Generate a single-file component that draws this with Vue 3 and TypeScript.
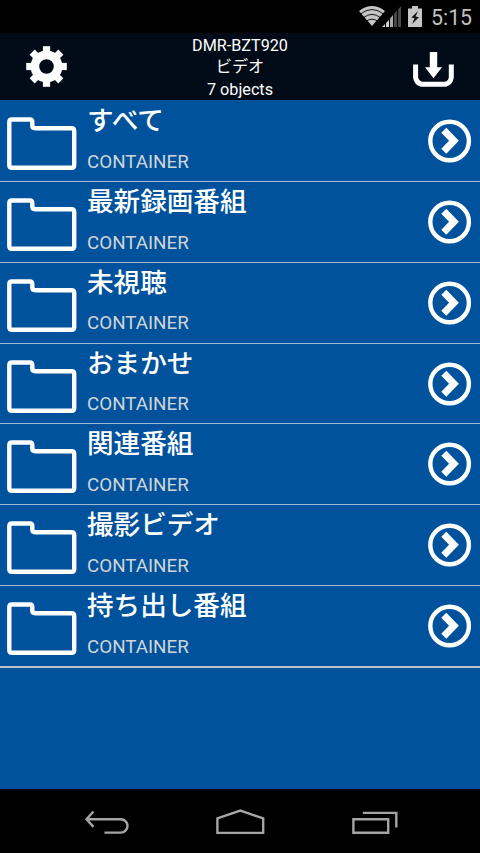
<script setup lang="ts">
interface MediaContainer {
  title: string
  kind: string
}

const device = 'DMR-BZT920'
const section = 'ビデオ'
const titles: string[] = ['すべて', '最新録画番組', '未視聴', 'おまかせ', '関連番組', '撮影ビデオ', '持ち出し番組']
const items: MediaContainer[] = titles.map((title) => ({ title, kind: 'CONTAINER' }))
const teeth: number[] = [0, 45, 90, 135, 180, 225, 270, 315]
</script>

<template>
  <div class="screen">
    <div class="status">
      <svg class="wifi" viewBox="0 0 26 20" width="26" height="20">
        <path d="M0 5 Q13 -5 26 5 L13 20Z" fill="#c4c4c4" />
        <path d="M1 8.3 Q13 -1.3 25 8.3 M4 12 Q13 4.7 22 12 M7.2 15.3 Q13 11 18.8 15.3" fill="none" stroke="#000" stroke-width="0.9" />
      </svg>
      <svg class="signal" viewBox="0 0 19 21" width="19" height="21">
        <path d="M0 21 L3 18V21Z M4 17 L7 14V21H4Z" fill="#d0d0d0" />
        <path d="M8 12.5 L11 9V21H8Z" fill="#aaa" />
        <path d="M12 8 L15 4.5V21H12Z M16 3.5 L19 0V21H16Z" fill="#484848" />
      </svg>
      <svg class="battery" viewBox="0 0 14 21" width="14" height="21">
        <path d="M0 2.5H4V0H10V2.5H14V21H0Z" fill="#c6c6c6" />
        <path d="M10 5 L3.4 11.5 L6.5 12.3 L4 18 L11 11.3 L7.6 10.4Z" fill="#151515" />
      </svg>
      <span class="clock">5:15</span>
    </div>

    <header class="header">
      <svg class="gear" viewBox="-20.5 -20.5 41 41" width="41" height="41">
        <rect v-for="angle in teeth" :key="angle" x="-3.6" y="-20.3" width="7.2" height="9" fill="#fff" :transform="`rotate(${angle})`" />
        <circle r="11.6" fill="none" stroke="#fff" stroke-width="8.6" />
      </svg>
      <div class="heading">
        <div>{{ device }}</div>
        <div class="section">{{ section }}</div>
        <div>{{ items.length }} objects</div>
      </div>
      <svg class="download" viewBox="0 0 41 36" width="41" height="36">
        <path d="M2.6 12.5V25.5Q3.5 31 8.5 32.2H32.5Q37.5 31 38.3 25.5V12.5" fill="none" stroke="#fff" stroke-width="5" stroke-linejoin="round" />
        <path d="M16.8 0H24.2V15.3H29L20.5 26.3L12 15.3H16.8Z" fill="#fff" />
      </svg>
    </header>

    <main class="list">
      <div v-for="item in items" :key="item.title" class="row">
        <svg class="folder" viewBox="0 0 70 54" width="70" height="54">
          <path d="M4.8 2.5H22.8Q25.3 2.5 25.3 5V8.2Q25.3 11.2 28.3 11.2H64.5Q67.2 11.2 67.2 14V48.2Q67.2 50.8 64.7 50.8H4.8Q2.3 50.8 2.3 48.2V5Q2.3 2.5 4.8 2.5Z" fill="none" stroke="#fff" stroke-width="4.4" />
        </svg>
        <div class="texts">
          <div class="title">{{ item.title }}</div>
          <div class="kind">{{ item.kind }}</div>
        </div>
        <svg class="arrow" viewBox="0 0 44 44" width="44" height="44">
          <circle cx="21.6" cy="22" r="19.3" fill="none" stroke="#fff" stroke-width="4.4" />
          <path d="M15.8 11.3L26 21.8L15.8 32.3" fill="none" stroke="#fff" stroke-width="7" />
        </svg>
      </div>
    </main>

    <nav class="navbar">
      <svg viewBox="0 0 46 26" width="46" height="26">
        <path d="M9.5 2.5L2.5 10.2L9.5 17.9M2.5 10.2H36.8A6.6 6.6 0 0 1 36.8 23.6H20.5" fill="none" stroke="#a5a5a5" stroke-width="2.4" />
      </svg>
      <svg viewBox="0 0 50 26" width="50" height="26">
        <path d="M1.4 9.4L24.3 1.5L47.2 9.4V23.9H1.4Z" fill="none" stroke="#a5a5a5" stroke-width="2.4" />
      </svg>
      <svg viewBox="0 0 46 26" width="46" height="26">
        <path d="M1.4 10.3H36.2V23.8H1.4ZM10.8 3.9H44.3V18.5" fill="none" stroke="#a5a5a5" stroke-width="2.4" />
      </svg>
    </nav>
  </div>
</template>

<style>
body {
  margin: 0;
  background: #000;
}
</style>

<style scoped>
.screen {
  display: flex;
  flex-direction: column;
  width: 480px;
  height: 853px;
  overflow: hidden;
  background: #00529c;
  color: #fff;
  font-family: Roboto, "Noto Sans CJK JP", sans-serif;
}
svg {
  display: block;
  flex: none;
}
.status {
  display: flex;
  flex: none;
  box-sizing: border-box;
  height: 33px;
  padding: 6px 9px 0 0;
  justify-content: flex-end;
  align-items: flex-start;
  background: #000;
}
.signal {
  margin-left: -3px;
}
.battery {
  margin-left: 7px;
}
.clock {
  margin-left: 9px;
  width: 40px;
  font-size: 21.3px;
  line-height: 23px;
  color: #c2c2c2;
  white-space: nowrap;
}
.header {
  display: flex;
  flex: none;
  box-sizing: border-box;
  height: 67px;
  padding: 0 26px;
  justify-content: space-between;
  background: #010b17;
}
.gear {
  margin-top: 13px;
}
.heading {
  padding-top: 2px;
  font-size: 16.2px;
  line-height: 22px;
  text-align: center;
}
.section {
  margin-top: -1px;
  margin-bottom: 1px;
}
.download {
  margin-top: 19px;
}
.list {
  flex: 1;
  padding-top: 1px;
}
.row {
  display: flex;
  box-sizing: border-box;
  height: 80.85px;
  padding: 0 8px 0 7px;
  border-bottom: 1px solid #9dbbd5;
}
.row:last-child {
  height: 82px;
  border-bottom: 2px solid #b9c3cb;
}
.folder {
  margin-top: 16px;
}
.texts {
  flex: 1;
  padding-left: 10px;
}
.title {
  height: 38px;
  font-size: 26.6px;
  font-weight: 500;
  line-height: 39px;
}
.kind {
  margin-top: 11.8px;
  font-size: 18.8px;
  line-height: 22px;
  color: #d2d5d8;
}
.arrow {
  margin-top: 18px;
}
.navbar {
  display: flex;
  flex: none;
  box-sizing: border-box;
  height: 64px;
  padding: 20px 82px 0 84px;
  justify-content: space-between;
  background: #000;
}
</style>
